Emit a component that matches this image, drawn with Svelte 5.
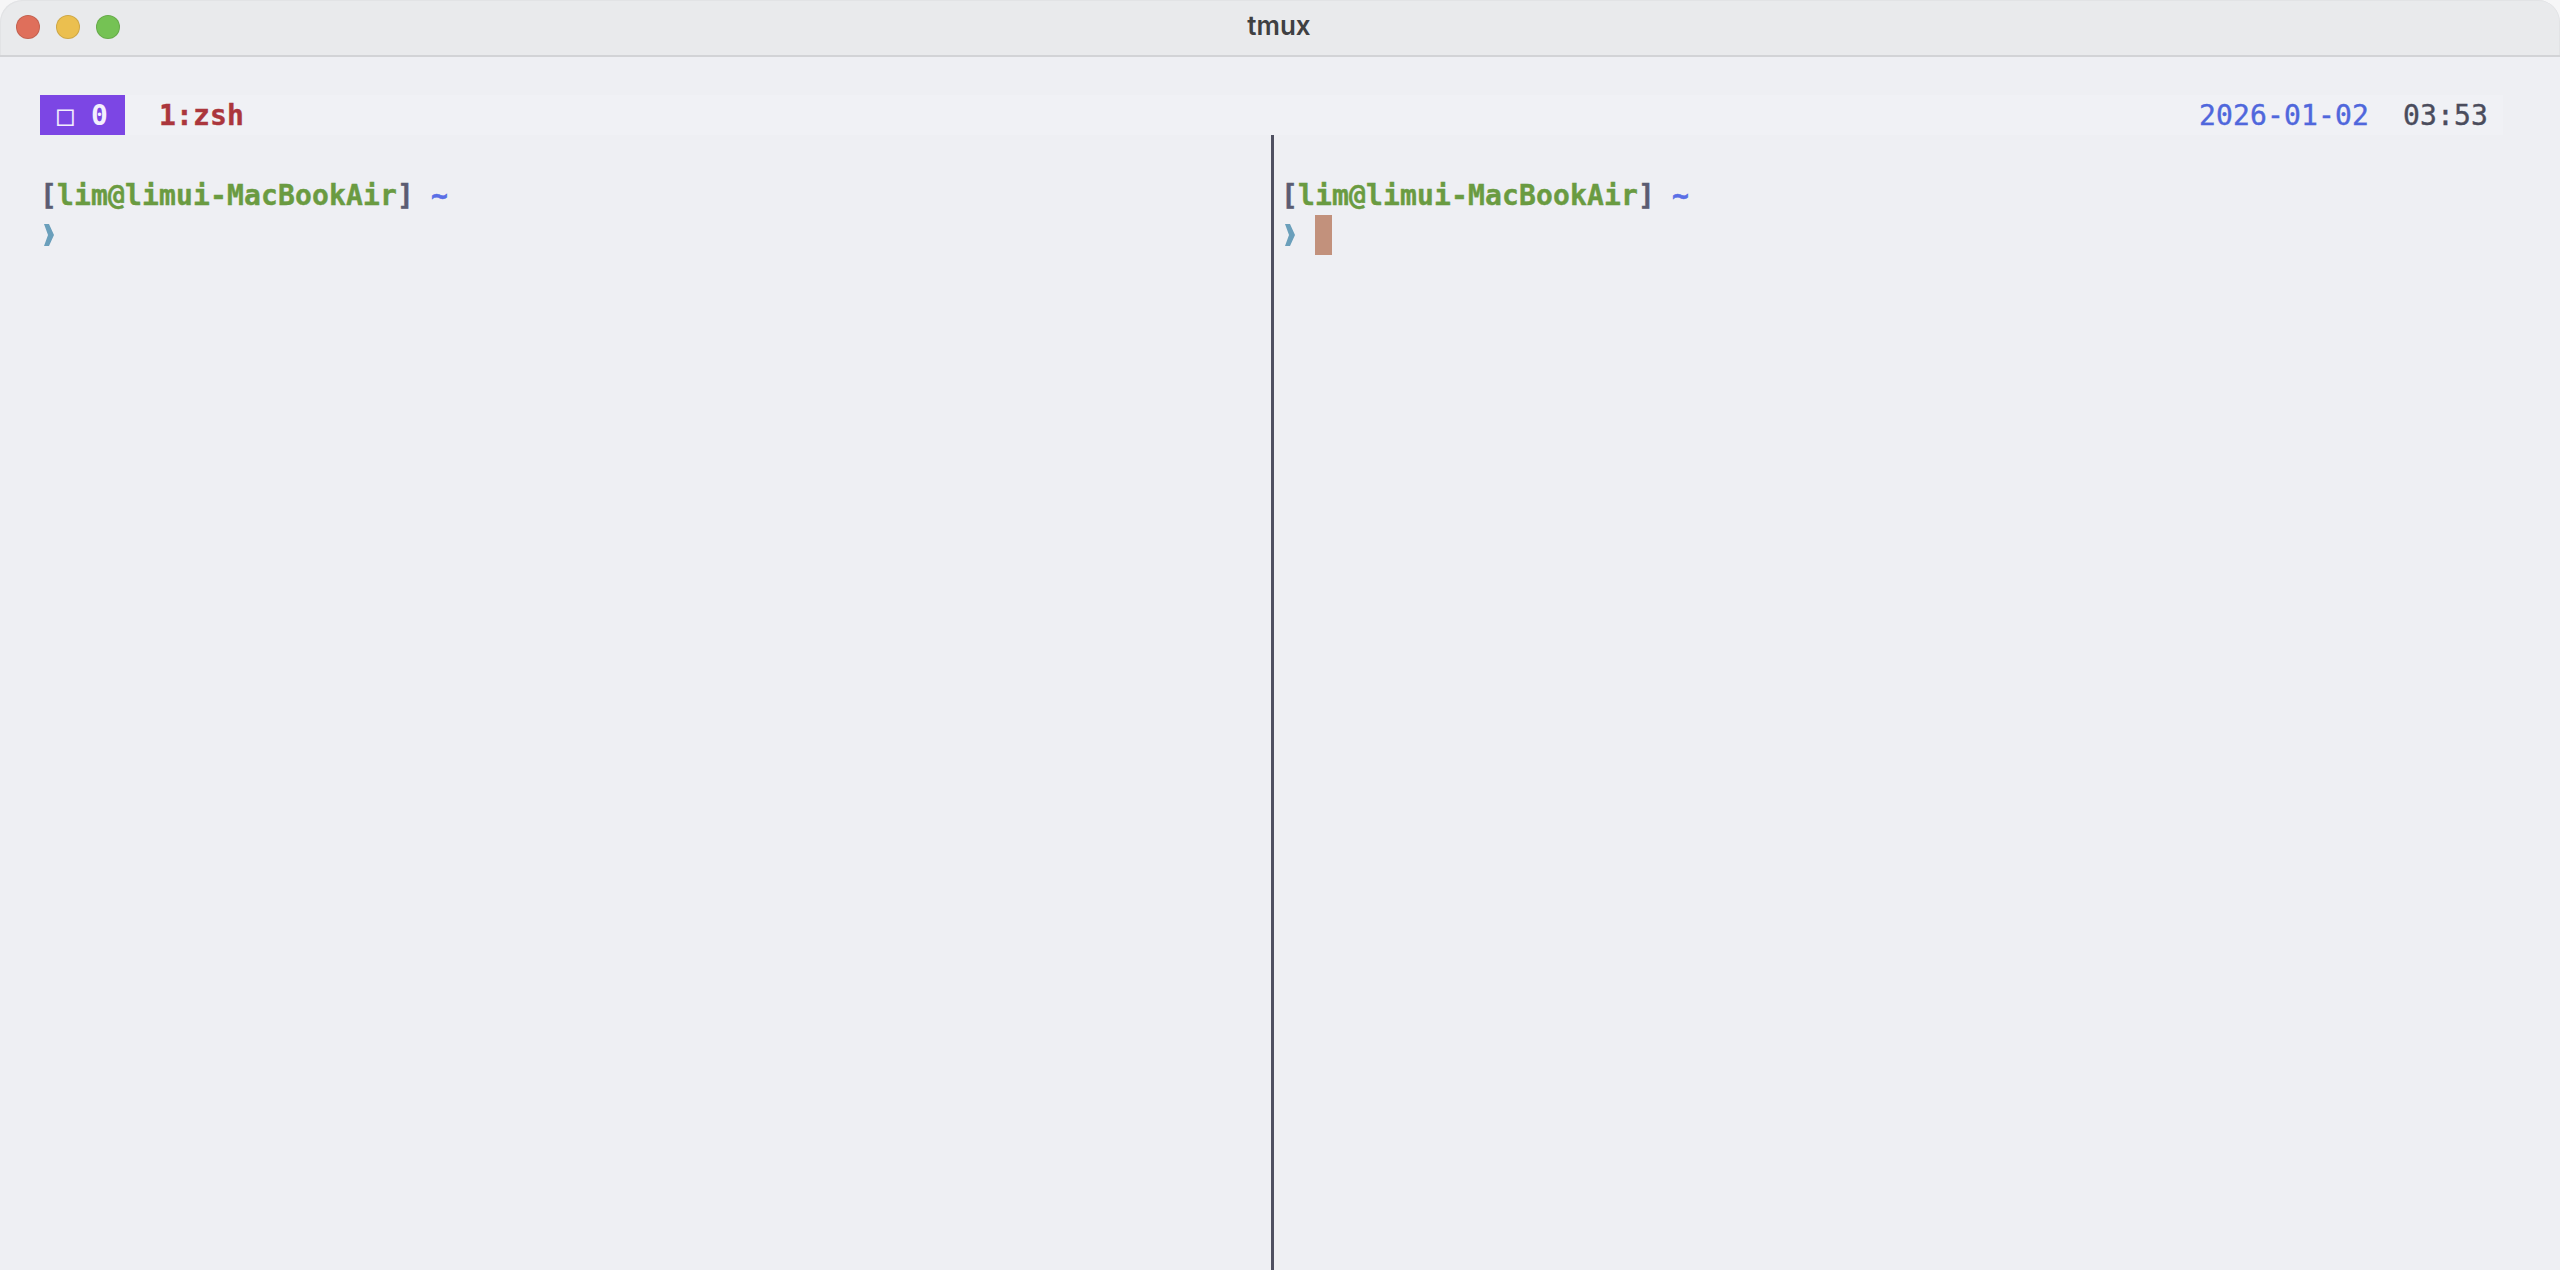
<script lang="ts">
	const prompts = [{ cursor: false }, { cursor: true }];
</script>

{#snippet prompt(cursor: boolean)}
	<div class="blank"></div>
	<div class="line">
		<span class="bracket">[</span><span class="host">lim@limui-MacBookAir</span><span class="bracket">]</span>
		<span class="path">~</span>
	</div>
	<div class="line">
		<svg class="chevron" width="17" height="40" viewBox="0 0 17 40" aria-hidden="true">
			<polygon points="4,9 9,9 14,20 9,31 4,31 8,20" />
		</svg>
		{#if cursor}<span class="cursor"></span>{/if}
	</div>
{/snippet}

<div class="window">
	<header class="titlebar">
		<div class="lights">
			<span class="light red"></span>
			<span class="light yellow"></span>
			<span class="light green"></span>
		</div>
		<div class="title">tmux</div>
	</header>

	<main class="terminal">
		<div class="status">
			<div class="session">□ 0</div>
			<div class="win">1:zsh</div>
			<div class="clock">
				<span class="date">2026-01-02</span>
				<span class="time">03:53</span>
			</div>
		</div>

		<div class="panes">
			<section class="pane left">{@render prompt(prompts[0].cursor)}</section>
			<div class="divider"></div>
			<section class="pane right">{@render prompt(prompts[1].cursor)}</section>
		</div>
	</main>
</div>

<style>
	:global(body) {
		margin: 0;
		background: #f6f6f7;
	}

	.window {
		height: 1270px;
		display: flex;
		flex-direction: column;
		background: #eeeff3;
		border-radius: 22px 22px 0 0;
		overflow: hidden;
	}

	.titlebar {
		height: 55px;
		flex: none;
		display: flex;
		align-items: center;
		justify-content: center;
		position: relative;
		background: #e9eaec;
		border-bottom: 2px solid #d2d3d6;
		border-radius: 22px 22px 0 0;
		box-shadow: inset 1px 1px 0 #e2e3e5, inset -1px 0 0 #e2e3e5;
	}

	.lights {
		position: absolute;
		left: 16px;
		top: 15px;
		display: flex;
		gap: 16px;
	}

	.light {
		width: 24px;
		height: 24px;
		border-radius: 50%;
		box-sizing: border-box;
		border: 1px solid rgba(0, 0, 0, 0.12);
	}

	.red { background: #df6f5b; }
	.yellow { background: #ebbf4f; }
	.green { background: #75c254; }

	.title {
		font: 600 26px/1 Inter, sans-serif;
		color: #3f4042;
		margin-top: -4px;
		margin-left: -2px;
	}

	.terminal {
		flex: 1;
		display: flex;
		flex-direction: column;
		padding: 38px 0 0 40px;
		min-height: 0;
		font-family: "DejaVu Sans Mono", monospace;
		font-size: 28px;
		letter-spacing: 0.14px;
		line-height: 42px;
	}

	.status {
		height: 40px;
		flex: none;
		display: flex;
		margin-right: 57px;
		background: #f0f1f5;
	}

	.session {
		width: 85px;
		text-align: center;
		background: #7c46e4;
		color: #f3effd;
		font-weight: bold;
	}

	.win {
		margin-left: 34px;
		color: #ab363c;
		font-weight: bold;
		-webkit-text-stroke: 0.4px #ab363c;
	}

	.clock {
		margin-left: auto;
		margin-right: 15px;
		display: flex;
		gap: 34px;
	}

	.date {
		color: #4f67dc;
		-webkit-text-stroke: 0.4px #4f67dc;
	}

	.time {
		color: #4a4c5c;
		-webkit-text-stroke: 0.4px #4a4c5c;
	}

	.panes {
		flex: 1;
		display: flex;
		min-height: 0;
	}

	.pane {
		flex: none;
	}

	.left { width: 1224px; }

	.divider {
		width: 3px;
		margin: 0 7px;
		background: #4f5061;
	}

	.blank { height: 40px; }

	.line {
		height: 40px;
		display: flex;
		font-weight: bold;
	}

	.bracket {
		color: #5b5c72;
		-webkit-text-stroke: 0.4px #5b5c72;
	}

	.host {
		color: #6a9b41;
		-webkit-text-stroke: 0.4px #6a9b41;
	}

	.path {
		color: #5a6fe6;
		-webkit-text-stroke: 0.6px #5a6fe6;
		margin-left: 17px;
	}

	.chevron {
		display: block;
		fill: #6a9fbb;
	}

	.cursor {
		width: 17px;
		height: 40px;
		margin-left: 17px;
		background: #c2917c;
	}
</style>
